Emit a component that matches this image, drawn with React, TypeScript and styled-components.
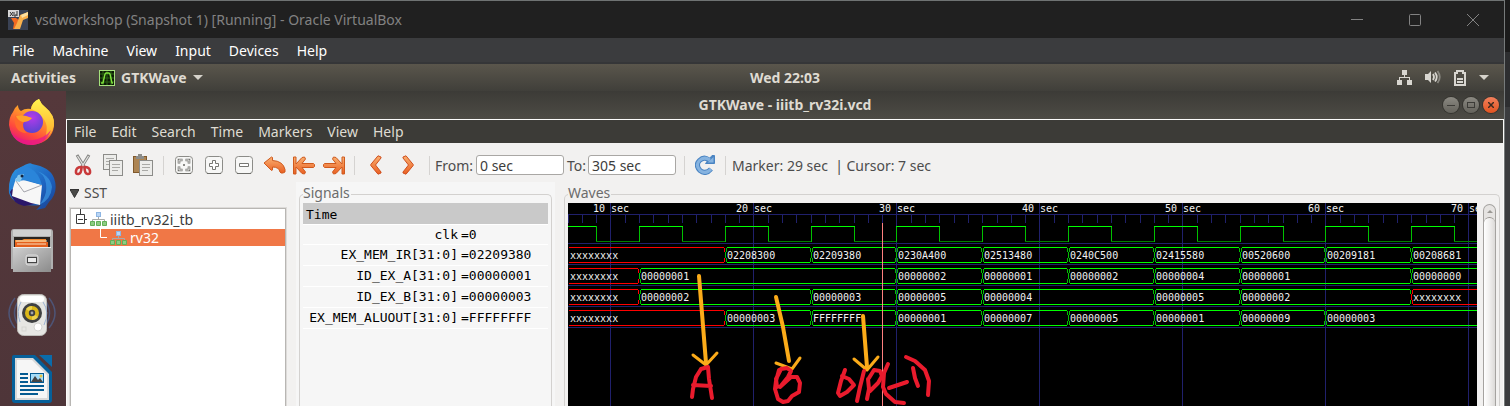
import React from "react";
import styled, { createGlobalStyle, css } from "styled-components";

const uiFont = `"Noto Sans", "Open Sans", sans-serif`;
const monoFont = `"DejaVu Sans Mono", monospace`;

const GlobalStyle = createGlobalStyle`
  *, *::before, *::after { box-sizing: border-box; }
  body { margin: 0; background: #242527; font-family: ${uiFont}; font-size: 14px; }
  button, input { font: inherit; color: inherit; }
  button { border: 0; padding: 0; background: none; }
  svg { display: block; }
`;

/* ---------- host window ---------- */

const Desktop = styled.div`
  display: flex;
  min-height: 100vh;
  background: linear-gradient(#1b1b1b 0 52px, #2d2e30 52px 107px, #3b3c3e 107px);
`;

const HostWindow = styled.div`
  flex: 1;
  min-width: 0;
  margin-right: 5px;
  display: flex;
  flex-direction: column;
  border-top: 1px solid #6f7373;
  border-right: 1px solid #767a7a;
`;

const HostTitleBar = styled.header`
  display: flex;
  align-items: center;
  height: 37px;
  padding: 0 2px 0 8px;
  background: #202020;
  color: #828282;
`;

const HostTitle = styled.h1`
  flex: 1;
  margin: 0 0 0 7px;
  font-size: 14px;
  font-weight: 400;
  line-height: 20px;
`;

const HostButton = styled.button`
  width: 58px;
  height: 36px;
  display: grid;
  place-items: center;
`;

const MenuBar = styled.nav<{ $guest?: boolean }>`
  display: flex;
  align-items: center;
  ${(p) =>
    p.$guest
      ? css`
          height: 23px;
          gap: 15px;
          padding-left: 7px;
          background: #3c3b37;
          color: #dfdbd2;
        `
      : css`
          height: 26px;
          gap: 18px;
          padding: 2px 0 0 12px;
          background: #3b3c3e;
          border-bottom: 2px solid #353638;
          color: #ffffff;
        `}
`;

const MenuItem = styled.button`
  line-height: 20px;
`;

/* ---------- guest desktop ---------- */

const TopPanel = styled.div`
  display: grid;
  grid-template-columns: 66px 1fr auto 1fr;
  align-items: center;
  height: 27px;
  background: linear-gradient(#5a564c, #403f3a);
  color: #dfdbd2;
  font-weight: 700;
  line-height: 20px;
`;

const PanelStart = styled.div`
  grid-column: 1 / 3;
  display: flex;
  align-items: center;
  gap: 23px;
  padding-left: 11px;
`;

const AppMenu = styled.button`
  display: flex;
  align-items: center;
  gap: 6px;
  font-weight: 700;
`;

const PanelEnd = styled.div`
  display: flex;
  align-items: center;
  justify-content: flex-end;
  gap: 13px;
  padding-right: 15px;
`;

const GuestBody = styled.div`
  flex: 1;
  display: flex;
`;

const Dock = styled.nav`
  width: 66px;
  flex: none;
  display: flex;
  flex-direction: column;
  gap: 16px;
  padding: 7px 0 0 8px;
  background: linear-gradient(#55383b, #4e3539);
`;

const DockButton = styled.button`
  width: 48px;
  height: 48px;
`;

const AppWindow = styled.main`
  flex: 1;
  min-width: 0;
  display: flex;
  flex-direction: column;
  background: #f2f1f0;
`;

const AppTitleBar = styled.header`
  display: grid;
  grid-template-columns: 1fr auto 1fr;
  align-items: center;
  height: 28px;
  background: linear-gradient(#3c3b37, #4d4b45);
  color: #dfdbd2;
`;

const AppTitle = styled.h2`
  grid-column: 2;
  margin: 0;
  font-size: 14px;
  line-height: 20px;
`;

const RoundButtons = styled.div`
  display: flex;
  justify-content: flex-end;
  gap: 4px;
  padding-right: 5px;
`;

const RoundButton = styled.button<{ $close?: boolean }>`
  width: 16px;
  height: 16px;
  border-radius: 50%;
  display: grid;
  place-items: center;
  background: ${(p) => (p.$close ? "linear-gradient(#f2805c, #e2531f)" : "linear-gradient(#8b8982, #64625b)")};
  box-shadow: 0 0 0 1px #35342f;
`;

const AppContent = styled.div`
  flex: 1;
  display: flex;
  flex-direction: column;
  border: 1px solid #fbfbfa;
  border-bottom: 0;
`;

const Toolbar = styled.div`
  display: flex;
  align-items: center;
  height: 39px;
  padding: 5px 0 0 1px;
  color: #4c4c4c;
`;

const ToolButton = styled.button<{ $wide?: boolean }>`
  width: ${(p) => (p.$wide ? 32 : 30)}px;
  height: 30px;
  display: grid;
  place-items: center;
`;

const Divider = styled.span`
  width: 1px;
  height: 19px;
  margin: 0 5px;
  background: #d5d3d1;
`;

const Field = styled.label`
  display: flex;
  align-items: center;
  margin-right: 3px;
`;

const FieldText = styled.span<{ $wide?: boolean }>`
  width: ${(p) => (p.$wide ? 41 : 21)}px;
`;

const TimeInput = styled.input`
  width: 88px;
  height: 20px;
  padding: 1px 3px 0;
  border: 1px solid #a9a7a4;
  border-radius: 3px;
  background: #ffffff;
  color: #3c3c3c;
`;

const MarkerStatus = styled.output`
  margin-left: 1px;
`;

const Panes = styled.div`
  flex: 1;
  display: flex;
`;

const TreePane = styled.section`
  width: 229px;
  flex: none;
  display: flex;
  flex-direction: column;
  padding: 1px 10px 0 3px;
`;

const TreeHeading = styled.button`
  display: flex;
  align-items: center;
  gap: 5px;
  height: 20px;
  margin-bottom: 5px;
  line-height: 20px;
  color: #4c4c4c;
`;

const TreeBox = styled.ul`
  flex: 1;
  margin: 0;
  padding: 0;
  list-style: none;
  background: #ffffff;
  border: 1px solid #b8b6b3;
  border-bottom: 0;
  outline: 1px solid #dddbd9;
`;

const TreeRow = styled.li<{ $selected?: boolean; $level: number }>`
  display: flex;
  align-items: center;
  gap: 3px;
  height: ${(p) => (p.$selected ? 17 : 20)}px;
  padding-left: ${(p) => (p.$level === 0 ? 5 : 28)}px;
  line-height: 17px;
  background: ${(p) => (p.$selected ? "#f07746" : "transparent")};
  color: ${(p) => (p.$selected ? "#ffffff" : "#3c3c3c")};
`;

const FramePane = styled.section<{ $grow?: boolean }>`
  display: flex;
  ${(p) =>
    p.$grow
      ? css`
          flex: 1;
          min-width: 0;
          padding: 4px 3px 0 9px;
        `
      : css`
          width: 259px;
          flex: none;
          padding: 4px 3px 0;
          background: #f6f6f6;
        `}
`;

const Frame = styled.fieldset`
  flex: 1;
  min-width: 0;
  margin: 0;
  padding: 0 3px;
  border: 1px solid #d3d1cf;
  border-bottom: 0;
  border-radius: 5px 5px 0 0;
`;

const FrameLegend = styled.legend`
  padding: 0 1px 0 0;
  height: 17px;
  line-height: 14px;
  color: #6c6c6c;
`;

const SignalTable = styled.table`
  width: 100%;
  border-collapse: collapse;
  table-layout: fixed;
  font-family: ${monoFont};
  font-size: 13px;
  color: #000000;
`;

const TimeHead = styled.th`
  height: 21px;
  padding: 3px 0 0 3px;
  line-height: 17px;
  font-weight: 400;
  text-align: left;
  background: #c9c9c9;
  border-bottom: 1px solid #ffffff;
`;

const SignalRow = styled.tr<{ $short?: boolean }>`
  height: ${(p) => (p.$short ? 20 : 21)}px;
  border-bottom: 1px solid #ffffff;
`;

const SignalName = styled.th`
  padding: 0 3px 0 0;
  font-weight: 400;
  line-height: 19px;
  text-align: right;
  white-space: nowrap;
`;

const SignalValue = styled.td`
  padding: 0;
  line-height: 19px;
`;

const WaveArea = styled.div`
  display: flex;
  height: 100%;
  min-height: 203px;
`;

const WaveCanvas = styled.svg`
  flex: 1;
  min-width: 0;
  height: auto;
  overflow: hidden;
  background: #000000;
  font-family: ${monoFont};
  font-size: 10px;
  fill: #f2f2f2;
  shape-rendering: crispEdges;
`;

const ScrollTrack = styled.div`
  width: 13px;
  margin: 1px 0 0 6px;
  border: 1px solid #a5a3a0;
  border-bottom: 0;
  border-radius: 7px 7px 0 0;
  background: #e6e4e2;
  display: flex;
  flex-direction: column;
`;

const ScrollUp = styled.button`
  height: 12px;
  display: grid;
  place-items: center;
`;

const ScrollThumb = styled.div`
  flex: 1;
  border-top: 1px solid #96948f;
  border-radius: 6px 6px 0 0;
  background: linear-gradient(90deg, #ffffff, #f0efee 50%, #dcdad8);
`;

/* ---------- waveform data ---------- */

const START = 7;
const PX_PER_SEC = 14.3;
const END = 72;
const timeX = (t: number) => Math.floor((t - START) * PX_PER_SEC);

type Segment = [number, string];
interface Signal {
  name: string;
  value: string;
  segments: Segment[];
}

const signals: Signal[] = [
  {
    name: "EX_MEM_IR[31:0]",
    value: "02209380",
    segments: [[7, "xxxxxxxx"], [18, "02208300"], [24, "02209380"], [30, "0230A400"], [36, "02513480"], [42, "0240C500"], [48, "02415580"], [54, "00520600"], [60, "00209181"], [66, "00208681"]],
  },
  {
    name: "ID_EX_A[31:0]",
    value: "00000001",
    segments: [[7, "xxxxxxxx"], [12, "00000001"], [30, "00000002"], [36, "00000001"], [42, "00000002"], [48, "00000004"], [54, "00000001"], [66, "00000000"]],
  },
  {
    name: "ID_EX_B[31:0]",
    value: "00000003",
    segments: [[7, "xxxxxxxx"], [12, "00000002"], [24, "00000003"], [30, "00000005"], [36, "00000004"], [48, "00000005"], [54, "00000002"], [66, "xxxxxxxx"]],
  },
  {
    name: "EX_MEM_ALUOUT[31:0]",
    value: "FFFFFFFF",
    segments: [[7, "xxxxxxxx"], [18, "00000003"], [24, "FFFFFFFF"], [30, "00000001"], [36, "00000007"], [42, "00000005"], [48, "00000001"], [54, "00000009"], [60, "00000003"]],
  },
];

const range = (from: number, to: number, step: number) => {
  const out: number[] = [];
  for (let t = from; t <= to; t += step) out.push(t);
  return out;
};

function Clock() {
  const edges = range(12, 66, 6);
  return (
    <g fill="none">
      <path d="M0 23.5H28" stroke="#00ff00" />
      <path d="M28.5 23V38" stroke="#00c000" />
      <path d={`M28 38.5H${timeX(12)}`} stroke="#008000" />
      {edges.map((t) => {
        const a = timeX(t);
        const b = timeX(t + 3);
        const c = timeX(t + 6);
        return (
          <g key={t}>
            <path d={`M${a + 0.5} 23V39M${b + 0.5} 23V39`} stroke="#00c000" />
            <path d={`M${a} 23.5H${b + 1}`} stroke="#00ff00" />
            <path d={`M${b} 38.5H${c}`} stroke="#008000" />
          </g>
        );
      })}
    </g>
  );
}

function Bus({ segments, top }: { segments: Segment[]; top: number }) {
  return (
    <g>
      {segments.map(([t, label], i) => {
        const unknown = label[0] === "x";
        const color = unknown ? "#ff0000" : "#00ff00";
        const edge = unknown ? "#ff0000" : "#00c000";
        const a = timeX(t);
        const next = segments[i + 1];
        const b = next ? timeX(next[0]) : timeX(END);
        const left = i === 0 ? 1 : a + 2;
        const right = b - 1;
        return (
          <g key={t}>
            <path d={`M${left} ${top + 0.5}H${right}M${left} ${top + 15.5}H${right}`} stroke={color} />
            {i > 0 && (
              <path
                d={`M${a + 1.5} ${top + 1}v4M${a + 0.5} ${top + 5}v6M${a + 1.5} ${top + 11}v4`}
                stroke={edge}
                fill="none"
              />
            )}
            {next && (
              <path
                d={`M${b - 0.5} ${top + 1}v4M${b + 0.5} ${top + 5}v1M${b + 0.5} ${top + 10}v1M${b - 0.5} ${top + 11}v4`}
                stroke={edge}
                fill="none"
              />
            )}
            <text x={a + 2} y={top + 12}>{label}</text>
          </g>
        );
      })}
    </g>
  );
}

function Annotations() {
  return (
    <g fill="none" strokeLinecap="round" strokeLinejoin="round" shapeRendering="auto">
      <g stroke="#fbab19" strokeWidth="4">
        <path d="M131 73L138 160" />
        <path d="M125 152L138 162L149 150" strokeWidth="3" />
        <path d="M208 94L215 124L221 158" />
        <path d="M208 160L224 166L232 155" strokeWidth="3" />
        <path d="M295 113L299 164" />
        <path d="M286 156L299 167L310 154" strokeWidth="3" />
      </g>
      <g stroke="#ea1b2d" strokeWidth="4">
        <path d="M124 194L125 186L128 174L133 166L140 164L141 176L144 195M125 182L143 183" />
        <path d="M211 167L208 178L207 186L210 196L215 199L220 198L224 193L231 189L232 180L229 174L223 174L212 184L220 174L223 168L219 165L213 166L208 176L209 184" />
        <path d="M277 167L273 178L270 190L272 193L279 189L286 182L281 176L274 173" />
        <path d="M296 168L292 184L289 198M300 176L301 186L299 196M301 175L306 167L312 168L314 173L310 180L302 188" />
        <path d="M320 161L316 170L315 184L318 191L327 199L336 200M321 185L339 179M345 165L347 175L350 183M338 154L347 158L357 167L361 178L360 192" />
      </g>
    </g>
  );
}

function Waves() {
  return (
    <WaveCanvas role="img" aria-label="Signal waveforms">
      <g stroke="#20206c" fill="none">
        <path d="M0 11.5H2000" />
        <path d={range(7, 80, 1).map((t) => `M${timeX(t) + 0.5} 11V20`).join("")} />
        {range(10, 80, 10).map((t) => (
          <line key={t} x1={timeX(t) + 0.5} x2={timeX(t) + 0.5} y1="0" y2="100%" />
        ))}
        <path d={[40, 61, 82, 103, 124].map((y) => `M0 ${y + 0.5}H2000`).join("")} />
      </g>
      {range(10, 70, 10).map((t) => (
        <text key={t} x={timeX(t) + 1} y="9" textAnchor="middle">{`${t} sec`}</text>
      ))}
      <Clock />
      {signals.map((s, i) => (
        <Bus key={s.name} segments={s.segments} top={44 + i * 21} />
      ))}
      <line x1="314.5" x2="314.5" y1="20" y2="100%" stroke="#ff8080" />
      <Annotations />
    </WaveCanvas>
  );
}

/* ---------- icons ---------- */

const VBoxIcon = () => (
  <svg width="20" height="20" viewBox="0 0 20 20">
    <rect width="20" height="20" fill="#3a4254" />
    <path d="M3 8h5l4 3-1 8H5l1-6z" fill="#f26a21" />
    <path d="M12 5l8-3v6l-5 2-3 9H6l3-6z" fill="#f9b04c" />
    <path d="M13 5l7-3v3l-6 3z" fill="#fde0a0" />
    <rect width="11" height="7" fill="#d8d8d8" />
    <path d="M2 2l3 4M5 2L2 6M6 2v4h2V4M9 1v5" stroke="#333" fill="none" />
  </svg>
);

const GtkWaveIcon = () => (
  <svg width="16" height="16" viewBox="0 0 16 16">
    <rect x=".5" y=".5" width="15" height="15" fill="#0c1a06" stroke="#a5e07c" />
    <path d="M4 1v14M8 1v14M12 1v14M1 4h14M1 8h14M1 12h14" stroke="#2c6414" />
    <path d="M2 13h2l2-9 1-1h3l1 1 2 9h1" stroke="#7fe23c" fill="none" strokeWidth="1.4" />
  </svg>
);

const DownArrow = () => (
  <svg width="10" height="5" viewBox="0 0 10 5"><path d="M0 0h10L5 5z" fill="#d6d3cb" /></svg>
);

const NetworkIcon = () => (
  <svg width="15" height="15" viewBox="0 0 15 15" fill="#d8d6d0">
    <path d="M5 0h5v5H8v2h5v3h2v5h-5v-5h2V8H3v2h2v5H0v-5h2V7h5V5H5z" />
  </svg>
);

const VolumeIcon = () => (
  <svg width="16" height="15" viewBox="0 0 16 15" fill="none">
    <path d="M0 4h3l3-3v12l-3-3H0z" fill="#d8d6d0" />
    <path d="M8 4q2 3 0 6M10 2.500q3.500 4.500 0 9" stroke="#d8d6d0" strokeWidth="1.800" />
    <path d="M12.500 1q4.500 6 0 12" stroke="#8a8881" strokeWidth="1.800" />
  </svg>
);

const BatteryIcon = () => (
  <svg width="12" height="16" viewBox="0 0 12 16">
    <path d="M3 1h6v2h2v12H1V3h2z" fill="none" stroke="#d8d6d0" strokeWidth="2" />
    <path d="M3 8h6v2H3zM3 11h6v2H3z" fill="#d8d6d0" />
  </svg>
);

const CutIcon = () => (
  <svg width="18" height="22" viewBox="0 0 18 22" fill="none">
    <path d="M3 1l8 13M15 1L7 14" stroke="#858583" strokeWidth="3" />
    <path d="M3.500 2l7.500 12M14.500 2L7 14" stroke="#e3e3e1" strokeWidth="1.200" />
    <path d="M7.500 13q-5 0-5.500 4-.5 3.500 2.500 3t3-7zM10.500 13q5 0 5.500 4 .5 3.500-2.500 3t-3-7z" stroke="#c9393a" strokeWidth="2.600" />
  </svg>
);

const Sheet = ({ x, y }: { x: number; y: number }) => (
  <g>
    <rect x={x + 0.5} y={y + 0.5} width="13" height="15" fill="#ececea" stroke="#8c8c89" />
    <path d={`M${x + 3} ${y + 4.5}h8m-8 3h8m-8 3h6`} stroke="#a9a9a6" />
  </g>
);

const CopyIcon = () => (
  <svg width="22" height="22" viewBox="0 0 22 22"><Sheet x={1} y={0} /><Sheet x={7} y={6} /></svg>
);

const PasteIcon = () => (
  <svg width="22" height="22" viewBox="0 0 22 22">
    <rect x="1.500" y="2.500" width="13" height="16" fill="#ad8554" stroke="#80592c" />
    <path d="M4 5V2h2V0h4v2h2v3z" fill="#8c8c89" />
    <Sheet x={7} y={6} />
  </svg>
);

const ZoomBox = ({ children }: { children: React.ReactNode }) => (
  <svg width="18" height="18" viewBox="0 0 18 18" fill="none">
    <rect x=".5" y=".5" width="17" height="17" rx="3" fill="#f7f7f6" stroke="#8c8c88" />
    <path d="M2 17.500h14" stroke="#6e6e6a" />
    {children}
  </svg>
);

const FitIcon = () => (
  <ZoomBox>
    <path d="M7.500 4H4v3.500M10.500 4H14v3.500M7.500 14H4v-3.500M10.500 14H14v-3.500" stroke="#73736f" strokeWidth="2.600" />
    <path d="M7 4H4v3M11 4h3v3M7 14H4v-3M11 14h3v-3" stroke="#fff" strokeWidth=".8" />
    <path d="M8 8h2v2H8z" fill="#8a8a86" />
  </ZoomBox>
);

const PlusIcon = () => (
  <ZoomBox><path d="M7.500 4.500h3v3h3v3h-3v3h-3v-3h-3v-3h3z" fill="#fff" stroke="#777773" /></ZoomBox>
);

const MinusIcon = () => (
  <ZoomBox><path d="M4.500 7.500h9v3h-9z" fill="#fff" stroke="#777773" /></ZoomBox>
);

const IconGradients = () => (
  <svg width="0" height="0" aria-hidden="true">
    <defs>
      <linearGradient id="orange" x1="0" y1="0" x2="0" y2="1">
        <stop offset="0" stopColor="#f9b071" />
        <stop offset="1" stopColor="#ea5f22" />
      </linearGradient>
    </defs>
  </svg>
);

const UndoIcon = () => (
  <svg width="23" height="18" viewBox="0 0 23 18">
    <path d="M1 7L8.500 1l1 .5v3Q20 5 22 13.500v2.500l-2 1h-2l-1-1q-1-5-7.500-5v3l-1 .5z" fill="url(#orange)" stroke="#cf5a1e" strokeLinejoin="round" />
  </svg>
);

const ToStartIcon = ({ flip }: { flip?: boolean }) => (
  <svg width="22" height="19" viewBox="0 0 22 19">
    <path
      transform={flip ? "matrix(-1 0 0 1 22 0)" : undefined}
      d="M.5 1h2.500v7l6-6.500 2.500-.5 1 2L9 7.500h11.500l1 1v2l-1 1H9l3.500 4.500-1 2-2.500-.5-6-6.500v7H.5z"
      fill="url(#orange)" stroke="#cf5a1e" strokeLinejoin="round"
    />
  </svg>
);

const ChevronIcon = ({ flip }: { flip?: boolean }) => (
  <svg width="12" height="20" viewBox="0 0 12 20">
    <path
      transform={flip ? "matrix(-1 0 0 1 12 0)" : undefined}
      d="M8 .8l3 1.200v1L5.500 10l5.500 7v1l-3 1.200L.8 10.500v-1z"
      fill="url(#orange)" stroke="#cf4f1e" strokeLinejoin="round"
    />
  </svg>
);

const ReloadIcon = () => (
  <svg width="20" height="20" viewBox="0 0 20 20" fill="none">
    <path d="M14 5Q9 1 4.500 5.500T5 15.500Q11 20 16 14" stroke="#4a84c2" strokeWidth="5" />
    <path d="M10.500 8.500h9V.5H17z" fill="#4a84c2" stroke="#4a84c2" />
    <path d="M15 5Q9 1 4.500 5.500T5 15.500Q11 20 16 14" stroke="#86b3e0" strokeWidth="3" />
    <path d="M12.500 7.500h6V2z" fill="#86b3e0" />
  </svg>
);

const HierarchyIcon = () => (
  <svg width="17" height="14" viewBox="0 0 17 14">
    <rect x="6.500" y=".5" width="4" height="4" fill="#b9d5f5" stroke="#8eb6e3" />
    <path d="M8.500 5v2M2.500 9V7.500h12V9" stroke="#a9aaa8" fill="none" />
    <path d="M.5 9.500h4v4h-4zM6.500 9.500h4v4h-4zM12.500 9.500h4v4h-4z" fill="#8dcc83" stroke="#62b058" />
  </svg>
);

const FirefoxIcon = () => (
  <svg width="48" height="48" viewBox="0 0 48 48">
    <defs>
      <linearGradient id="fox" x1=".8" y1="0" x2=".3" y2="1">
        <stop offset="0" stopColor="#fff14a" />
        <stop offset=".4" stopColor="#ff9a2a" />
        <stop offset=".75" stopColor="#ff4a3c" />
        <stop offset="1" stopColor="#e5147f" />
      </linearGradient>
      <linearGradient id="foxTail" x1=".5" y1="0" x2=".5" y2="1">
        <stop offset="0" stopColor="#fff44f" />
        <stop offset="1" stopColor="#ffa92b" />
      </linearGradient>
      <radialGradient id="globe" cx=".5" cy=".3" r=".7">
        <stop offset="0" stopColor="#b43bea" />
        <stop offset="1" stopColor="#5a44d0" />
      </radialGradient>
    </defs>
    <path d="M5 14Q6 10 10 7q0 4 3 6 4-3 10-2Q24 4 31 1q2 5 6 8 10 8 9 19-2 16-21 19Q4 47 1 27q0-8 4-13z" fill="url(#fox)" />
    <path d="M23 11Q24 4 31 1q2 5 6 8 10 8 9 18-2 10-9 13 5-14-4-22-4-5-10-7z" fill="url(#foxTail)" />
    <circle cx="24" cy="24" r="11" fill="url(#globe)" />
    <path d="M7 18q7-2 11 2l-3 6q0 6 4 9-8 0-11-6-2-5-1-11z" fill="#ff6a2c" />
    <path d="M8 18q7-2 16 2-3 4-9 4-5-1-7-6z" fill="#ffa12b" />
    <path d="M3 34q8 10 22 8 12-2 18-10-5 14-19 15Q9 47 3 34z" fill="#e8188a" opacity=".75" />
  </svg>
);

const ThunderbirdIcon = () => (
  <svg width="48" height="48" viewBox="0 0 48 48">
    <defs>
      <linearGradient id="bird" x1="0" y1="0" x2="1" y2="1">
        <stop offset="0" stopColor="#2f9be6" />
        <stop offset=".6" stopColor="#1d63c0" />
        <stop offset="1" stopColor="#1a3f8e" />
      </linearGradient>
    </defs>
    <path d="M15 4Q22 0 24 2q18 3 22 14 5 14-5 24l-4 6-9 2 5-5Q6 46 1 31 0 16 7 8z" fill="url(#bird)" />
    <path d="M25 8q15 3 13 22-2 8-7 13Q43 38 44 25 42 12 25 8z" fill="#3a97e4" opacity=".7" />
    <path d="M2 30q3 12 14 14l16-3-28-14z" fill="#2b176a" />
    <path d="M8 16l26 7-2 20-9-2-19-7 1-8z" fill="#f7f7f7" />
    <path d="M8 19l8 11 18-7" fill="none" stroke="#a5a5ac" />
    <path d="M10 7q6-5 12-1 9 5 12 17l-16-5-8 1q-2-6 0-12z" fill="#2a85da" />
    <path d="M7 19l3-6 6-1-4 8z" fill="#87c9ef" />
    <circle cx="14" cy="14" r="1.500" fill="#12233f" />
  </svg>
);

const FilesIcon = () => (
  <svg width="48" height="48" viewBox="0 0 48 48">
    <defs>
      <linearGradient id="metal" x1="0" y1="0" x2="1" y2="1">
        <stop offset="0" stopColor="#d0d0d0" />
        <stop offset="1" stopColor="#8b8b8b" />
      </linearGradient>
    </defs>
    <path d="M3 6q0-3 3-3h36q3 0 3 3v37H3z" fill="#b0b0b0" />
    <path d="M5 4h38v6H5z" fill="#d0d0d0" />
    <rect x="6" y="11" width="36" height="10" fill="#2a2522" />
    <path d="M7 14h7l2-1h22v8H7z" fill="#f0882e" />
    <path d="M7 16h33v5H7z" fill="#e45f1c" />
    <path d="M8 15h31M9 18h29" stroke="#fbe0bd" />
    <rect x="5" y="21" width="38" height="25" fill="url(#metal)" />
    <path d="M5 21.500h38" stroke="#ededed" />
    <rect x="18" y="29" width="12" height="10" rx="2" fill="#b5b5b5" stroke="#dfdfdf" />
    <rect x="19.500" y="31.500" width="9" height="5" fill="#ececec" stroke="#444" />
  </svg>
);

const SpeakerIcon = () => (
  <svg width="48" height="48" viewBox="0 0 48 48" fill="none">
    <path d="M7 8Q-5 23 7 38M11 10Q2 23 11 36M41 8q12 15 0 30M37 10q9 13 0 26" stroke="#4d5c86" strokeWidth="1.500" opacity=".8" />
    <rect x="9.500" y="4.500" width="29" height="41" rx="6" fill="#e6e6e3" stroke="#bdbdb9" />
    <rect x="12" y="6" width="24" height="6" rx="3" fill="#fff" />
    <circle cx="24" cy="23" r="10" fill="#3f4142" />
    <circle cx="24" cy="23" r="7" fill="#dcb819" />
    <path d="M24 23l-6-4q2-3 6-3zM24 23l6 4q-2 3-6 3z" fill="#ecd24d" />
    <circle cx="24" cy="23" r="3.200" fill="#3f4142" />
    <circle cx="24" cy="23" r="1.400" fill="#a5a7a8" />
    <circle cx="30" cy="37" r="4" fill="#fff" stroke="#d5d5d2" />
    <rect x="14" y="37" width="4" height="4" stroke="#d5d5d2" />
    <path d="M35 12q7 10 1 23M13 12q-5 9-1 20" stroke="#9db4d4" />
  </svg>
);

const WriterIcon = () => (
  <svg width="48" height="50" viewBox="0 0 48 50">
    <path d="M6 1h21l17 17v28q0 3-3 3H7q-3 0-3-3V3q0-2 2-2z" fill="#06609a" />
    <path d="M31 1h13v12z" fill="#0a6cab" />
    <path d="M7 4h18l16 16v26H7z" fill="#d9d9d9" />
    <path d="M9 6h15l15 15v23H9z" fill="#f6f6f6" />
    <path d="M12 20h8M12 24h8M12 28h8M12 32h24M12 36h24M12 40h18" stroke="#055b92" strokeWidth="2" />
    <rect x="22.500" y="19.500" width="13" height="9" fill="#a5dcf8" stroke="#055b92" />
    <path d="M23 28l4-6 3 4 2-2 3 4z" fill="#444" />
    <circle cx="33" cy="22" r="1.500" fill="#e7c443" />
  </svg>
);

/* ---------- page ---------- */

const hostMenus = ["File", "Machine", "View", "Input", "Devices", "Help"];
const appMenus = ["File", "Edit", "Search", "Time", "Markers", "View", "Help"];

const dockApps = [
  { name: "Firefox", Icon: FirefoxIcon },
  { name: "Thunderbird", Icon: ThunderbirdIcon },
  { name: "Files", Icon: FilesIcon },
  { name: "Rhythmbox", Icon: SpeakerIcon },
  { name: "LibreOffice Writer", Icon: WriterIcon },
];

export default function App() {
  return (
    <Desktop>
      <GlobalStyle />
      <IconGradients />
      <HostWindow>
        <HostTitleBar>
          <VBoxIcon />
          <HostTitle>vsdworkshop (Snapshot 1) [Running] - Oracle VirtualBox</HostTitle>
          <HostButton aria-label="Minimize">
            <svg width="12" height="12"><path d="M0 5.500h12" stroke="#828282" /></svg>
          </HostButton>
          <HostButton aria-label="Maximize">
            <svg width="12" height="12"><rect x=".5" y=".5" width="11" height="11" rx="1" fill="none" stroke="#828282" /></svg>
          </HostButton>
          <HostButton aria-label="Close">
            <svg width="12" height="12"><path d="M0 0l12 12M12 0L0 12" stroke="#828282" /></svg>
          </HostButton>
        </HostTitleBar>
        <MenuBar aria-label="Machine menu">
          {hostMenus.map((m) => <MenuItem key={m}>{m}</MenuItem>)}
        </MenuBar>

        <TopPanel>
          <PanelStart>
            <MenuItem>Activities</MenuItem>
            <AppMenu><GtkWaveIcon />GTKWave<DownArrow /></AppMenu>
          </PanelStart>
          <time>Wed 22:03</time>
          <PanelEnd>
            <NetworkIcon /><VolumeIcon /><BatteryIcon /><DownArrow />
          </PanelEnd>
        </TopPanel>

        <GuestBody>
          <Dock aria-label="Dock">
            {dockApps.map(({ name, Icon }) => (
              <DockButton key={name} aria-label={name}><Icon /></DockButton>
            ))}
          </Dock>

          <AppWindow>
            <AppTitleBar>
              <AppTitle>GTKWave - iiitb_rv32i.vcd</AppTitle>
              <RoundButtons>
                <RoundButton aria-label="Minimize window">
                  <svg width="8" height="8"><path d="M0 4.500h8" stroke="#3c3b37" /></svg>
                </RoundButton>
                <RoundButton aria-label="Maximize window">
                  <svg width="8" height="6"><rect x=".5" y=".5" width="7" height="5" fill="none" stroke="#3c3b37" /></svg>
                </RoundButton>
                <RoundButton $close aria-label="Close window">
                  <svg width="6" height="6"><path d="M0 0l6 6M6 0L0 6" stroke="#3c2a20" strokeWidth="1.500" /></svg>
                </RoundButton>
              </RoundButtons>
            </AppTitleBar>

            <AppContent>
              <MenuBar $guest aria-label="Application menu">
                {appMenus.map((m) => <MenuItem key={m}>{m}</MenuItem>)}
              </MenuBar>

              <Toolbar>
                <ToolButton aria-label="Cut"><CutIcon /></ToolButton>
                <ToolButton aria-label="Copy"><CopyIcon /></ToolButton>
                <ToolButton aria-label="Paste"><PasteIcon /></ToolButton>
                <Divider />
                <ToolButton aria-label="Zoom fit"><FitIcon /></ToolButton>
                <ToolButton aria-label="Zoom in"><PlusIcon /></ToolButton>
                <ToolButton aria-label="Zoom out"><MinusIcon /></ToolButton>
                <ToolButton aria-label="Zoom undo"><UndoIcon /></ToolButton>
                <ToolButton aria-label="Zoom to start"><ToStartIcon /></ToolButton>
                <ToolButton aria-label="Zoom to end"><ToStartIcon flip /></ToolButton>
                <Divider />
                <ToolButton $wide aria-label="Previous edge"><ChevronIcon /></ToolButton>
                <ToolButton $wide aria-label="Next edge"><ChevronIcon flip /></ToolButton>
                <Divider />
                <Field>
                  <FieldText $wide>From:</FieldText>
                  <TimeInput defaultValue="0 sec" />
                </Field>
                <Field>
                  <FieldText>To:</FieldText>
                  <TimeInput defaultValue="305 sec" />
                </Field>
                <Divider />
                <ToolButton aria-label="Reload"><ReloadIcon /></ToolButton>
                <Divider />
                <MarkerStatus>Marker: 29 sec&nbsp; | Cursor: 7 sec</MarkerStatus>
              </Toolbar>

              <Panes>
                <TreePane>
                  <TreeHeading aria-expanded="true">
                    <svg width="9" height="9"><path d="M0 .5h9L4.500 8.500z" fill="#4a4a48" stroke="#333" /></svg>
                    SST
                  </TreeHeading>
                  <TreeBox>
                    <TreeRow $level={0}>
                      <svg width="11" height="20">
                        <path d="M4.500 0v5M.5 5.500h8v9h-8zM2 10.500h5M9 10.500h2" fill="none" stroke="#3c3c3c" />
                      </svg>
                      <HierarchyIcon />
                      iiitb_rv32i_tb
                    </TreeRow>
                    <TreeRow $level={1} $selected>
                      <svg width="8" height="17"><path d="M1.500 0v8.500H8" fill="none" stroke="#fff" /></svg>
                      <HierarchyIcon />
                      rv32
                    </TreeRow>
                  </TreeBox>
                </TreePane>

                <FramePane>
                  <Frame>
                    <FrameLegend>Signals</FrameLegend>
                    <SignalTable>
                      <colgroup><col width="158" /><col /></colgroup>
                      <thead>
                        <tr><TimeHead colSpan={2}>Time</TimeHead></tr>
                      </thead>
                      <tbody>
                        <SignalRow $short>
                          <SignalName scope="row">clk</SignalName>
                          <SignalValue>=0</SignalValue>
                        </SignalRow>
                        {signals.map((s) => (
                          <SignalRow key={s.name}>
                            <SignalName scope="row">{s.name}</SignalName>
                            <SignalValue>={s.value}</SignalValue>
                          </SignalRow>
                        ))}
                      </tbody>
                    </SignalTable>
                  </Frame>
                </FramePane>

                <FramePane $grow>
                  <Frame>
                    <FrameLegend>Waves</FrameLegend>
                    <WaveArea>
                      <Waves />
                      <ScrollTrack>
                        <ScrollUp aria-label="Scroll up">
                          <svg width="6" height="3"><path d="M0 3h6L3 0z" fill="#9a9894" /></svg>
                        </ScrollUp>
                        <ScrollThumb />
                      </ScrollTrack>
                    </WaveArea>
                  </Frame>
                </FramePane>
              </Panes>
            </AppContent>
          </AppWindow>
        </GuestBody>
      </HostWindow>
    </Desktop>
  );
}
